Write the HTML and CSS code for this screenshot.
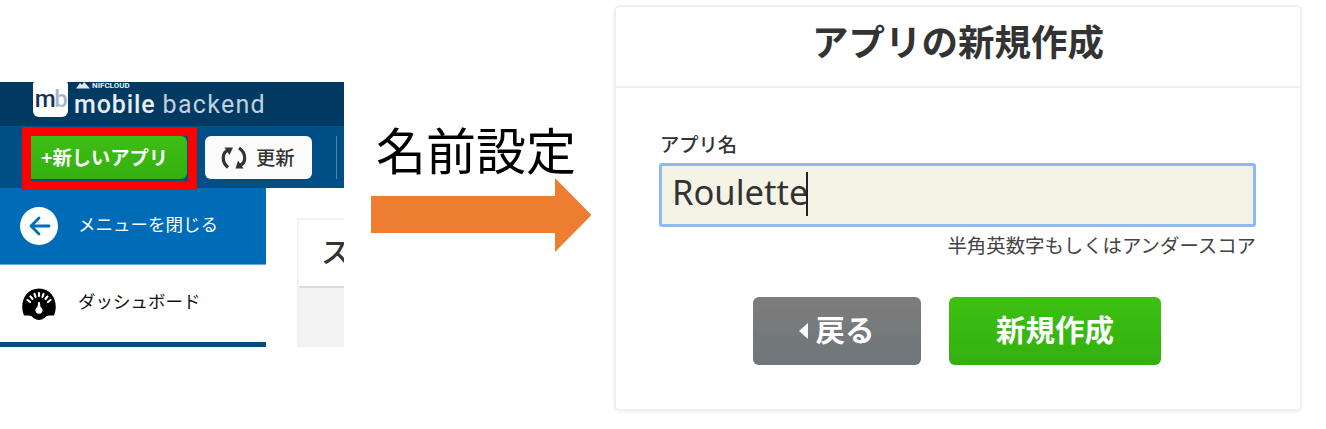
FILE: index.html
```html
<!DOCTYPE html>
<html lang="ja">
<head>
<meta charset="utf-8">
<title>アプリの新規作成</title>
<link rel="stylesheet" href="styles.css">
</head>
<body>
<main class="slide">
  <section class="console">
    <header class="brand">
      <div class="brand-mark"><span class="mark-m">m</span><span class="mark-b">b</span></div>
      <div class="brand-text">
        <div class="brand-company">
          <svg width="14" height="7" viewBox="0 0 14 7"><path d="M0 6.500 4 1 6 3 8 0 14 6.500Z" fill="#e3e9ef"/></svg>
          <span>NIFCLOUD</span>
        </div>
        <div class="brand-name"><span class="name-strong">mobile</span><span class="name-light">backend</span></div>
      </div>
    </header>
    <div class="toolbar">
      <div class="highlight"><div class="new-app">+新しいアプリ</div></div>
      <div class="refresh">
        <svg width="28" height="24" viewBox="0 0 28 24">
          <path d="M9 4C1.500 6 1.500 16 8 21.500" fill="none" stroke="#333" stroke-width="3.200"/>
          <path d="M4.500 1.500H13L9.500 9Z" fill="#333"/>
          <path d="M19 2C26.500 7 26.500 17 19.500 19.500" fill="none" stroke="#333" stroke-width="3.200"/>
          <path d="M23.500 22.500H15.500L18 14.500Z" fill="#333"/>
        </svg>
        <span>更新</span>
      </div>
      <div class="divider"></div>
    </div>
    <div class="console-body">
      <nav class="menu">
        <div class="menu-item active">
          <svg width="38" height="38" viewBox="0 0 38 38"><circle cx="19" cy="19" r="19" fill="#fff"/><path d="M29 19H11M19 11 11 19 19 27" fill="none" stroke="#006cb7" stroke-width="2.800" stroke-linecap="round" stroke-linejoin="round"/></svg>
          <span>メニューを閉じる</span>
        </div>
        <div class="menu-item">
          <svg width="38" height="34" viewBox="0 0 38 34">
            <path d="M4 28.500C-1 16 5 1.500 19 1.500S39 16 34 28.500H29Q26 28.500 24.500 31Q19 35 13.500 31Q12 28.500 9 28.500Z" fill="#000"/>
            <path d="M7.500 13 10 15M10.500 9.500 12.500 12M14.500 7 15.500 10M19 6V9M23.500 7 22.500 10M27.500 9.500 25.500 12M30.500 13 28 15" stroke="#fff" stroke-width="2.200" stroke-linecap="round"/>
            <path d="M18.200 15H19.800L20.500 20A3.600 3.600 0 1 1 17.500 20Z" fill="#fff"/>
          </svg>
          <span>ダッシュボード</span>
        </div>
      </nav>
      <div class="content-card"><div class="content-title">ス</div></div>
    </div>
  </section>
  <section class="step">
    <div class="step-label">名前設定</div>
    <svg class="step-arrow" width="220" height="76" viewBox="0 0 220 76"><path d="M0 19H184V1L220.500 38 184 75V56H0Z" fill="#ed7d31"/></svg>
  </section>
  <section class="dialog">
    <h1 class="dialog-title">アプリの新規作成</h1>
    <div class="dialog-body">
      <div class="label">アプリ名</div>
      <div class="field"><span>Roulette</span><i class="caret"></i></div>
      <div class="hint">半角英数字もしくはアンダースコア</div>
      <div class="actions">
        <div class="btn back"><svg width="9" height="16" viewBox="0 0 9 16"><path d="M9 0V16L0 8Z" fill="#fff"/></svg><span>戻る</span></div>
        <div class="btn create"><span>新規作成</span></div>
      </div>
    </div>
  </section>
</main>
</body>
</html>
```
FILE: styles.css
```css
* { box-sizing: border-box; }
body { margin: 0; background: #fff; font-family: "Noto Sans CJK JP", "Noto Sans", sans-serif; color: #333; }
svg { display: block; flex: none; }
.slide { display: flex; align-items: flex-start; width: 1326px; height: 429px; overflow: hidden; white-space: nowrap; }

.console { width: 344px; height: 265px; margin-top: 82px; overflow: hidden; flex: none; }
.brand { height: 44px; background: #003a63; display: flex; padding-left: 33px; gap: 7px; }
.brand-mark { width: 35px; height: 35px; background: #fff; border-radius: 2px 2px 6px 6px; display: flex; justify-content: center; font: 500 24px/34px Roboto, sans-serif; letter-spacing: -1.5px; }
.mark-m { color: #16345f; }
.mark-b { color: #a9b6c6; }
.brand-text { color: #e8edf2; font-family: Roboto, sans-serif; }
.brand-company { display: flex; gap: 2px; height: 8px; font: 700 8px/8px Roboto, sans-serif; padding-left: 1px; }
.brand-name { display: flex; gap: 7px; font-size: 25px; line-height: 30px; margin-left: -1px; }
.name-strong { font-weight: 500; letter-spacing: 0.9px; }
.name-light { color: #c3d0db; letter-spacing: 1.3px; }

.toolbar { height: 62px; background: #005086; display: flex; align-items: flex-start; padding-left: 22px; }
.highlight { width: 175px; height: 63px; border: 9px solid #f00; margin-top: 1px; position: relative; z-index: 1; background: #005086; }
.new-app { width: 156px; height: 43px; background: linear-gradient(#3dbe14, #34b00f); border-radius: 0 6px 6px 0; color: #fff; font-size: 19.300px; font-weight: 700; line-height: 42px; padding-left: 10px; }
.refresh { width: 107px; height: 43px; margin: 10px 0 0 8px; background: #fbfbfb; border-radius: 6px; display: flex; align-items: center; gap: 8px; padding-left: 15px; font-size: 19.300px; line-height: 41px; font-weight: 500; }
.refresh span { padding-bottom: 1px; }
.divider { width: 1px; height: 43px; background: #4e84aa; margin: 10px 0 0 24px; }

.console-body { display: flex; height: 159px; }
.menu { width: 266px; height: 159px; border-bottom: 5px solid #004c80; flex: none; }
.menu-item { height: 77px; display: flex; align-items: center; gap: 20px; padding-left: 20px; font-size: 17.500px; line-height: 26px; color: #111; }
.menu-item span { padding-bottom: 5px; }
.menu-item.active { background: #006cb7; color: #fff; border-bottom: 1px solid #6aaad6; }
.content-card { width: 60px; height: 140px; margin: 30px 0 0 31px; border: 2px solid #f2f2f2; background: #f3f3f3; flex: none; }
.content-title { height: 68px; background: #fff; border-bottom: 2px solid #ddd; padding-left: 22px; font-size: 29px; line-height: 61px; font-weight: 500; }

.step { width: 270px; padding: 117px 0 0 27px; flex: none; color: #000; }
.step-label { padding-left: 5px; font-size: 50px; line-height: 62px; height: 60px; }

.dialog { width: 688px; height: 406px; margin-top: 5px; border: 2px solid #f0f0f0; border-radius: 6px; box-shadow: 0 1px 3px #eee; flex: none; }
.dialog-title { margin: 0; height: 81px; border-bottom: 2px solid #efefef; font-size: 36.500px; line-height: 67px; font-weight: 700; text-align: center; }
.dialog-body { padding: 42px 44px 0 43px; }
.label { font-size: 19.300px; line-height: 28px; font-weight: 500; padding-left: 1px; }
.field { height: 64px; margin-top: 5px; border: 3px solid #8fb9f5; border-radius: 3px; background: #f5f3e6; display: flex; padding: 6px 0 0 10px; font: 34.500px/40px "Noto Sans", sans-serif; }
.caret { width: 1.5px; height: 44px; background: #222; margin-left: -2px; }
.hint { font-size: 19.400px; line-height: 35px; text-align: right; font-weight: 400; color: #444; }
.actions { display: flex; gap: 28px; margin: 35px 0 0 94px; }
.btn { height: 68px; border-radius: 6px; display: flex; justify-content: center; align-items: center; color: #fff; font-size: 29.500px; font-weight: 700; line-height: 62px; }
.btn span { padding-bottom: 7px; }
.back { width: 168px; gap: 7px; background: linear-gradient(#7d7d7b, #6d777a); }
.create { width: 212px; background: linear-gradient(#3dc013, #33b00f); }
```
